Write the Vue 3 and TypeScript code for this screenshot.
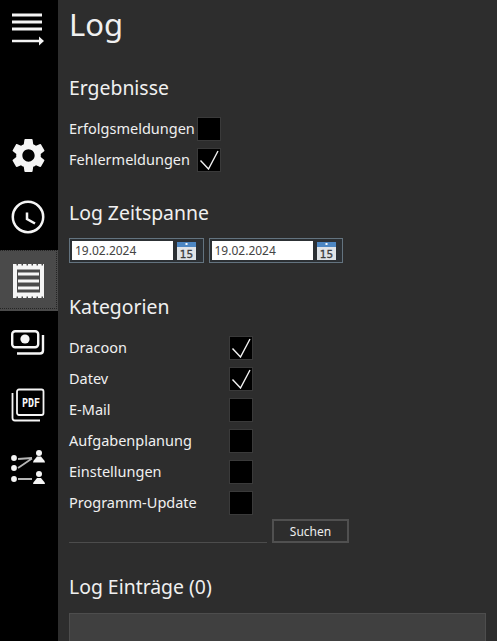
<script setup lang="ts">
interface Option {
  label: string
  checked: boolean
}

const results: Option[] = [
  { label: 'Erfolgsmeldungen', checked: false },
  { label: 'Fehlermeldungen', checked: true },
]

const categories: Option[] = [
  { label: 'Dracoon', checked: true },
  { label: 'Datev', checked: true },
  { label: 'E-Mail', checked: false },
  { label: 'Aufgabenplanung', checked: false },
  { label: 'Einstellungen', checked: false },
  { label: 'Programm-Update', checked: false },
]

const dates = ['19.02.2024', '19.02.2024']
</script>

<template>
  <div class="app">
    <nav class="sidebar">
      <button class="nav-btn menu">
        <svg width="36" height="36" viewBox="0 0 36 36" fill="none" stroke="#f4f4f4" stroke-width="3">
          <path d="M2 3h30M2 10h30M2 17h30" />
          <path d="M2 29h29" stroke-width="2.500" />
          <path d="M29 24.500l5 4.500-5 4.500z" fill="#f4f4f4" stroke="none" />
        </svg>
      </button>
      <button class="nav-btn gear">
        <svg width="41" height="41" viewBox="0 0 24 24" fill="#f5f5f5">
          <path d="M19.140 12.940c.04-.3.060-.61.060-.94 0-.32-.02-.64-.07-.94l2.030-1.580a.49.49 0 0 0 .12-.61l-1.920-3.320a.488.488 0 0 0-.59-.22l-2.390.96c-.5-.38-1.030-.7-1.620-.94l-.36-2.540a.484.484 0 0 0-.48-.41h-3.840c-.24 0-.43.17-.47.41l-.36 2.540c-.59.24-1.130.57-1.620.94l-2.390-.96c-.22-.08-.47 0-.59.22L2.740 8.870c-.12.21-.08.47.12.61l2.030 1.580c-.05.3-.09.63-.09.94s.02.64.07.94l-2.030 1.580a.49.49 0 0 0-.12.61l1.920 3.320c.12.22.37.29.59.22l2.390-.96c.5.38 1.030.7 1.620.94l.36 2.540c.05.24.24.41.48.41h3.840c.24 0 .44-.17.47-.41l.36-2.540c.59-.24 1.130-.56 1.620-.94l2.390.96c.22.08.47 0 .59-.22l1.920-3.320c.12-.22.07-.47-.12-.61l-2.010-1.580zM12 15.600c-1.980 0-3.600-1.620-3.600-3.600s1.620-3.600 3.600-3.600 3.600 1.620 3.600 3.600-1.620 3.600-3.600 3.600z" />
        </svg>
      </button>
      <button class="nav-btn clock">
        <svg width="36" height="36" viewBox="0 0 36 36" fill="none" stroke="#f5f5f5" stroke-width="2.500">
          <circle cx="18" cy="18" r="15.200" />
          <path d="M17 13.500V20l8 4.500" />
        </svg>
      </button>
      <button class="nav-btn log active">
        <svg width="31" height="34" viewBox="0 0 31 34" fill="none" stroke="#f5f5f5">
          <path d="M0 1.200h31M0 32.800h31" stroke-width="2.400" stroke-dasharray="3.500 1.500" />
          <path d="M2 3.500h27v27H2z" stroke-width="4" />
          <path d="M5 10h21M5 17h21M5 24h21" stroke-width="3" />
        </svg>
      </button>
      <button class="nav-btn money">
        <svg width="34" height="25" viewBox="0 0 34 25" fill="none" stroke="#f5f5f5" stroke-width="2.400">
          <rect x="1.200" y="1.200" width="26" height="16" rx="3" />
          <circle cx="14" cy="9" r="4.600" fill="#f5f5f5" stroke="none" />
          <path d="M6 23.500h23q3 0 3-3V5" />
        </svg>
      </button>
      <button class="nav-btn pdf">
        <svg width="34" height="34" viewBox="0 0 34 34" fill="none" stroke="#f5f5f5" stroke-width="1.800">
          <rect x="6" y="1.500" width="26.500" height="25.500" rx="2" />
          <path d="M1.500 5v25q0 2.500 2.500 2.500h25" />
          <text x="11" y="19" class="pdf-text" textLength="18" lengthAdjust="spacingAndGlyphs">PDF</text>
        </svg>
      </button>
      <button class="nav-btn flow">
        <svg width="34" height="34" viewBox="0 0 34 34" fill="#f5f5f5">
          <circle cx="3" cy="8" r="2.900" />
          <circle cx="3" cy="18" r="2.900" />
          <circle cx="3" cy="29" r="2.900" />
          <path d="M7 9l14-1M7 18L21 8.500M7 29h14" stroke="#b5b5b5" stroke-width="1.800" fill="none" />
          <circle cx="28" cy="3" r="3" />
          <path d="M22 12.500q0-2 2-3.500l2-2.500h4l2 2.500q2 1.500 2 3.500z" />
          <circle cx="28" cy="24" r="3" />
          <path d="M22 34q0-2 2-3.500l2-2.500h4l2 2.500q2 1.500 2 3.500z" />
        </svg>
      </button>
    </nav>

    <main class="content">
      <h1 class="title">Log</h1>

      <h2 class="heading results-heading">Ergebnisse</h2>
      <div class="results">
        <label v-for="item in results" :key="item.label" class="result-row">
          <span class="label">{{ item.label }}</span>
          <span class="check">
            <svg v-if="item.checked" width="20" height="20" viewBox="0 0 20 20" fill="none" stroke="#f2f2f2" stroke-width="1.400">
              <path d="M1.500 10.500l8 8.500L19 1" />
            </svg>
          </span>
        </label>
      </div>

      <h2 class="heading range-heading">Log Zeitspanne</h2>
      <div class="dates">
        <div v-for="(date, i) in dates" :key="i" class="date-picker">
          <span class="date-input">{{ date }}</span>
          <svg class="cal" width="19" height="18" viewBox="0 0 19 18">
            <rect width="19" height="18" fill="#dfe3e7" />
            <rect width="19" height="5" fill="#4c86c2" />
            <rect x="8.500" y="1" width="2" height="2" fill="#f4f8fb" />
            <text x="9.500" y="16" class="cal-text" text-anchor="middle">15</text>
          </svg>
        </div>
      </div>

      <h2 class="heading cat-heading">Kategorien</h2>
      <div class="categories">
        <label v-for="item in categories" :key="item.label" class="cat-row">
          <span class="label">{{ item.label }}</span>
          <span class="check">
            <svg v-if="item.checked" width="20" height="20" viewBox="0 0 20 20" fill="none" stroke="#f2f2f2" stroke-width="1.400">
              <path d="M1.500 10.500l8 8.500L19 1" />
            </svg>
          </span>
        </label>
      </div>

      <div class="search">
        <span class="search-input"></span>
        <button class="search-btn">Suchen</button>
      </div>

      <h2 class="heading entries-heading">Log Einträge (0)</h2>
      <div class="entries"></div>
    </main>
  </div>
</template>

<style>
html, body {
  margin: 0;
  height: 100%;
  overflow: hidden;
  background: #2d2d2d;
}
</style>

<style scoped>
.app {
  display: flex;
  height: 641px;
  overflow: hidden;
  font-family: "Noto Sans", "Open Sans", sans-serif;
  color: #f0f0f0;
  background: #2d2d2d;
}

.sidebar {
  width: 58px;
  flex-shrink: 0;
  display: flex;
  flex-direction: column;
  background: #000;
}

.nav-btn {
  display: flex;
  align-items: center;
  justify-content: center;
  box-sizing: border-box;
  border: 0;
  padding: 0 2px 0 0;
  background: transparent;
  width: 58px;
  height: 62px;
  flex-shrink: 0;
}

.menu {
  height: 60px;
  margin-bottom: 64px;
}

.log.active {
  position: relative;
  height: 61px;
  margin-top: 2px;
  background: #4a4a4a;
}

.log.active::after {
  content: '';
  position: absolute;
  top: 0;
  right: 1px;
  bottom: 2px;
  left: 0;
  border: 1px dotted #242424;
  border-left: 0;
}

.money {
  height: 63px;
}

.pdf-text {
  font-family: "DejaVu Sans Mono", monospace;
  font-size: 13px;
  font-weight: 700;
  fill: #f5f5f5;
  stroke: none;
}

.content {
  flex: 1;
  min-width: 0;
  padding-left: 11px;
}

.title {
  margin: 0;
  font-size: 31px;
  font-weight: 400;
  line-height: 49px;
}

.heading {
  margin: 0;
  font-size: 19.400px;
  font-weight: 400;
  line-height: 26px;
}

.results-heading {
  margin-top: 26px;
}

.results {
  display: flex;
  flex-direction: column;
  gap: 7px;
  margin-top: 16px;
}

.result-row {
  display: grid;
  grid-template-columns: 128px 24px;
  grid-template-rows: 24px;
  align-items: center;
  height: 24px;
}

.label {
  align-self: start;
  font-size: 14.500px;
  line-height: 22px;
  white-space: nowrap;
}

.check {
  display: flex;
  align-items: center;
  justify-content: center;
  width: 24px;
  height: 24px;
  box-sizing: border-box;
  background: #000;
  border: 1px solid #3a3a3a;
}

.range-heading {
  margin-top: 28px;
}

.dates {
  display: flex;
  gap: 5px;
  margin-top: 12px;
}

.date-picker {
  display: flex;
  align-items: center;
  width: 134.500px;
  height: 25px;
  box-sizing: border-box;
  padding: 0 2px;
  background: #2c3034;
  border: 1px solid #63737f;
}

.date-input {
  width: 101px;
  height: 19px;
  box-sizing: border-box;
  background: #fff;
  color: #444;
  font-size: 12px;
  line-height: 19px;
  padding-left: 3px;
}

.cal {
  flex-shrink: 0;
  margin-left: 4px;
}

.cal-text {
  font-family: "DejaVu Sans", sans-serif;
  font-size: 10.500px;
  fill: #3c3c3c;
  stroke: #3c3c3c;
  stroke-width: 0.300;
}

.cat-heading {
  margin-top: 31px;
}

.categories {
  display: flex;
  flex-direction: column;
  gap: 7px;
  margin-top: 16px;
}

.cat-row {
  display: grid;
  grid-template-columns: 160px 24px;
  grid-template-rows: 24px;
  align-items: center;
  height: 24px;
}

.search {
  display: flex;
  align-items: flex-end;
  gap: 5px;
  margin-top: 4px;
}

.search-input {
  width: 198px;
  height: 23px;
  box-sizing: border-box;
  border-bottom: 1px solid #4c4c4c;
}

.search-btn {
  width: 77px;
  height: 24px;
  padding: 0;
  background: transparent;
  border: 2px solid #505050;
  color: #eee;
  font-family: inherit;
  font-size: 12px;
}

.entries-heading {
  margin-top: 31px;
}

.entries {
  margin-top: 13px;
  width: 417px;
  height: 60px;
  box-sizing: border-box;
  background: #404040;
  border: 1px solid #4d4d4d;
}
</style>
